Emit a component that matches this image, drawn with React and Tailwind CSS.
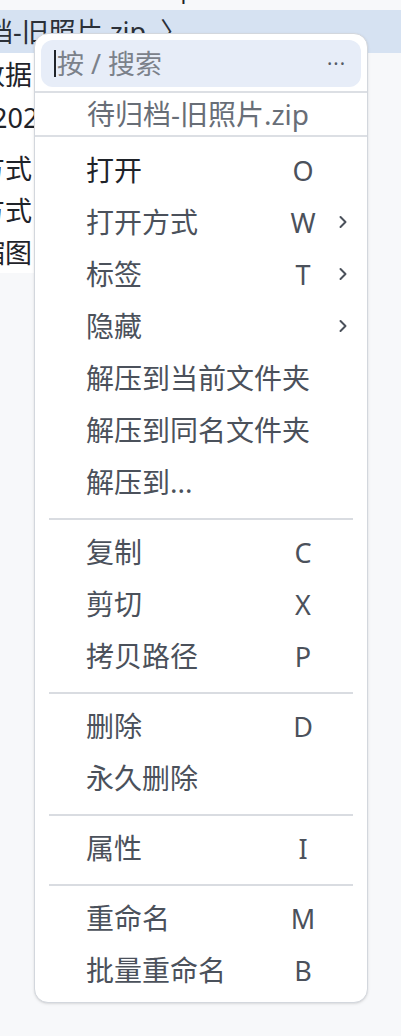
import React from 'react';

const font = { fontFamily: '"Noto Sans", "Noto Sans CJK SC", sans-serif' };

// Entries of the context menu, grouped between separators.
const groups = [
  [
    { label: '打开', key: 'O', strong: true },
    { label: '打开方式', key: 'W', sub: true },
    { label: '标签', key: 'T', sub: true },
    { label: '隐藏', sub: true },
    { label: '解压到当前文件夹' },
    { label: '解压到同名文件夹' },
    { label: '解压到...' },
  ],
  [
    { label: '复制', key: 'C' },
    { label: '剪切', key: 'X' },
    { label: '拷贝路径', key: 'P' },
  ],
  [
    { label: '删除', key: 'D' },
    { label: '永久删除' },
  ],
  [{ label: '属性', key: 'I' }],
  [
    { label: '重命名', key: 'M' },
    { label: '批量重命名', key: 'B' },
  ],
];

function Chevron() {
  return (
    <svg width="10" height="14" viewBox="0 0 10 14" fill="none">
      <path d="M2.5 2 L7.5 7 L2.5 12" stroke="#4b515b" strokeWidth="2" strokeLinecap="round" strokeLinejoin="round" />
    </svg>
  );
}

function MenuItem({ item }) {
  return (
    <div className="flex items-center h-[52px] pl-[51px] pr-[17px] text-[28px] leading-none">
      <span className={`flex-1 whitespace-nowrap ${item.strong ? 'text-[#1f2329]' : 'text-[#4b515b]'}`}>
        {item.label}
      </span>
      <span className="w-[30px] ml-[20px] text-center text-[27px] text-[#4b515b]">{item.key || ''}</span>
      <span className="w-[14px] ml-[18px] flex justify-center">{item.sub ? <Chevron /> : null}</span>
    </div>
  );
}

export default function App() {
  return (
    <div className="relative w-[401px] h-[1036px] overflow-hidden bg-[#f7f8fa]" style={font}>
      {/* file list behind the menu */}
      <div className="flex flex-col text-[27px] leading-none text-[#1f2329]">
        <div className="h-[10px] flex items-end whitespace-nowrap">
          <span className="ml-[20px] mb-[10px]">▸ 目标　　　|</span>
        </div>
        <div className="h-[43px] bg-[#d6e2f2] flex items-center whitespace-nowrap">
          <span className="ml-[-14px] text-[#2b3038]">档-旧照片.zip</span>
          <span className="ml-[14px] text-[#2b3038]">〉</span>
        </div>
        <div className="h-[43px] bg-white w-[40px] flex items-center whitespace-nowrap">
          <span className="ml-[-22px]">数据</span>
        </div>
        <div className="h-[43px] bg-white w-[40px] flex items-center whitespace-nowrap">
          <span className="ml-[-8px]">2024</span>
        </div>
        <div className="h-[50px] bg-white w-[40px] flex items-center whitespace-nowrap pt-[8px]">
          <span className="ml-[-22px]">方式</span>
        </div>
        <div className="h-[42px] bg-white w-[40px] flex items-center whitespace-nowrap">
          <span className="ml-[-22px]">方式</span>
        </div>
        <div className="h-[42px] bg-white w-[40px] flex items-center whitespace-nowrap">
          <span className="ml-[-22px]">缩图</span>
        </div>
      </div>

      {/* context menu */}
      <div className="absolute left-[34px] top-[33px] w-[334px] bg-white border border-[#d3d7dd] rounded-[14px] pt-[6px] pb-[6px] shadow-sm">
        <div className="mx-[6px] h-[47px] rounded-[12px] bg-[#e7edf8] flex items-center pl-[13px] pr-[15px]">
          <span className="w-[2px] h-[27px] bg-[#1f2329]" />
          <span className="flex-1 ml-[1px] text-[27px] leading-none text-[#7b818a] whitespace-nowrap">按 / 搜索</span>
          <span className="text-[20px] tracking-[1px] text-[#555b66] leading-none">···</span>
        </div>
        <div className="mt-[4px] h-[2px] bg-[#dcdfe4]" />
        <div className="h-[42px] flex items-center justify-center text-[28px] leading-none text-[#686e77] whitespace-nowrap pr-[6px]">
          待归档-旧照片.zip
        </div>
        <div className="h-[2px] bg-[#dcdfe4]" />
        <div className="pt-[7px]">
          {groups.map((g, i) => (
            <div key={i}>
              {i > 0 && <div className="mx-[14px] mt-[10px] mb-[6px] h-[2px] bg-[#d9dce1]" />}
              {g.map((item) => (
                <MenuItem key={item.label} item={item} />
              ))}
            </div>
          ))}
        </div>
      </div>
    </div>
  );
}
